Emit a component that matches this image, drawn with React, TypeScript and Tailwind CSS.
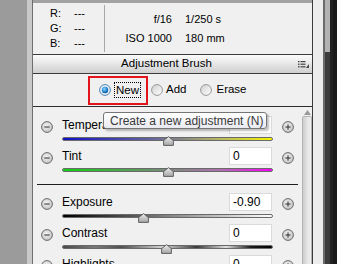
import React from 'react';

const sliders = [
  { id: 'temp', label: 'Temperature', value: '', pos: 50, track: 'bg-[linear-gradient(to_right,#1010c8,#6a6a9a_45%,#b8b860_75%,#f4f400)]' },
  { id: 'tint', label: 'Tint', value: '0', pos: 50, track: 'bg-[linear-gradient(to_right,#10d010,#709070_45%,#b070b0_75%,#f800f8)]' },
];

const tone = [
  { id: 'exposure', label: 'Exposure', value: '-0.90', pos: 38.5, track: 'bg-[linear-gradient(to_right,#000,#5a5a5a_35%,#b8b8b8_70%,#fff)]' },
  { id: 'contrast', label: 'Contrast', value: '0', pos: 49.5, track: 'bg-[linear-gradient(to_right,#4a4a4a,#7a7a7a_15%,#505050_28%,#d8d8d8_48%,#3a3a3a_64%,#e0e0e0_78%,#1a1a1a_90%,#000)]' },
  { id: 'highlights', label: 'Highlights', value: '0', pos: 50, track: 'bg-[linear-gradient(to_right,#555,#ddd)]' },
];

function RoundButton({ plus }: { plus?: boolean }) {
  return (
    <svg width="12" height="12" viewBox="0 0 12 12" className="block">
      <defs>
        <radialGradient id={plus ? 'gp' : 'gm'} cx="45%" cy="40%" r="60%">
          <stop offset="0" stopColor="#f4f4f4" />
          <stop offset="1" stopColor="#c4c4c4" />
        </radialGradient>
      </defs>
      <circle cx="6" cy="6" r="5.4" fill={`url(#${plus ? 'gp' : 'gm'})`} stroke="#5e5e5e" strokeWidth="0.9" />
      <path d="M3.4 6h5.2" stroke="#2a2a2a" strokeWidth="1" />
      {plus && <path d="M6 3.4v5.2" stroke="#2a2a2a" strokeWidth="1" />}
    </svg>
  );
}

function Thumb() {
  return (
    <svg width="11" height="10" viewBox="0 0 11 10" className="block">
      <defs>
        <linearGradient id="th" x1="0" y1="0" x2="0" y2="1">
          <stop offset="0" stopColor="#eeeeee" />
          <stop offset="1" stopColor="#a4a4a4" />
        </linearGradient>
      </defs>
      <path d="M5.5 0.6 L10.4 4.6 L10.4 9.4 L0.6 9.4 L0.6 4.6 Z" fill="url(#th)" stroke="#555" strokeWidth="0.9" />
    </svg>
  );
}

function SliderRow({ label, value, pos, track }: { label: string; value: string; pos: number; track: string }) {
  return (
    <div className="flex h-[31px] shrink-0 pl-[8px]">
      <div className="mt-[5px] w-[12px]">
        <RoundButton />
      </div>
      <div className="ml-[9px] flex w-[211px] flex-col">
        <div className="flex h-[18px] items-center justify-between">
          <span className="text-[12px] leading-none text-black">{label}</span>
          <div className="mr-[1px] flex h-[18px] w-[43px] items-center border border-[#dadada] bg-white pl-[3px] text-[12px] text-black">
            {value}
          </div>
        </div>
        <div className={`relative mt-[3px] h-[4px] rounded-full border border-[#6a6a6a] ${track}`}>
          <div className="absolute top-[-2px] -ml-[5px]" style={{ left: `${pos}%` }}>
            <Thumb />
          </div>
        </div>
      </div>
      <div className="ml-[9px] mt-[5px] w-[12px]">
        <RoundButton plus />
      </div>
    </div>
  );
}

function Radio({ checked }: { checked?: boolean }) {
  if (checked) {
    return (
      <svg width="12" height="12" viewBox="0 0 12 12" className="block shrink-0">
        <defs>
          <radialGradient id="rc" cx="40%" cy="35%" r="65%">
            <stop offset="0" stopColor="#8fd3ff" />
            <stop offset="0.6" stopColor="#2b8fd6" />
            <stop offset="1" stopColor="#0d4f8f" />
          </radialGradient>
        </defs>
        <circle cx="6" cy="6" r="5.4" fill="#e6eef6" stroke="#3d7bad" strokeWidth="0.9" />
        <circle cx="6" cy="6" r="3.2" fill="url(#rc)" />
      </svg>
    );
  }
  return (
    <svg width="12" height="12" viewBox="0 0 12 12" className="block shrink-0">
      <defs>
        <linearGradient id="ru" x1="0" y1="0" x2="1" y2="1">
          <stop offset="0" stopColor="#d0d0d0" />
          <stop offset="1" stopColor="#ffffff" />
        </linearGradient>
      </defs>
      <circle cx="6" cy="6" r="5.4" fill="url(#ru)" stroke="#8c8e90" strokeWidth="0.9" />
    </svg>
  );
}

export default function App() {
  return (
    <div className="relative flex h-[264px] w-[337px] overflow-hidden bg-[#9b9b9b] font-['Liberation_Sans',Arial,sans-serif]">
      {/* left gutter */}
      <div className="w-[27px] shrink-0 bg-[#9b9b9b]" />
      <div className="w-[5px] shrink-0 bg-[#c8c8c8]" />
      <div className="w-px shrink-0 bg-[#6e6e6e]" />

      {/* panel */}
      <div className="flex w-[280px] shrink-0 flex-col border-r border-[#3c3c3c] bg-[#f0f0f0]">
        <div className="h-[3px] shrink-0 bg-[#a2a2a2]" />

        {/* info */}
        <div className="flex h-[51px] shrink-0 text-[11px] text-black">
          <div className="w-[71px] pl-[17px] pt-[3px] leading-[15px]">
            {['R:', 'G:', 'B:'].map((c) => (
              <div key={c} className="flex">
                <span className="w-[24px]">{c}</span>
                <span>---</span>
              </div>
            ))}
          </div>
          <div className="my-[2px] w-px bg-[#a8a8a8]" />
          <div className="flex pt-[7px] leading-[19px]">
            <div className="w-[67px] text-right">
              <div>f/16</div>
              <div>ISO 1000</div>
            </div>
            <div className="ml-[13px]">
              <div>1/250 s</div>
              <div>180 mm</div>
            </div>
          </div>
        </div>

        {/* header */}
        <div className="flex h-[20px] shrink-0 items-center border-y border-[#3c3c3c] bg-[linear-gradient(#fbfbfb,#e4e4e4_55%,#cfcfcf)]">
          <span className="flex-1 pl-[2px] text-center text-[11.5px] text-black">Adjustment Brush</span>
          <svg width="11" height="7" viewBox="0 0 11 7" className="mr-[3px]">
            <rect x="0" y="0" width="1.5" height="1.2" fill="#333" />
            <rect x="0" y="2.6" width="1.5" height="1.2" fill="#333" />
            <rect x="0" y="5.2" width="1.5" height="1.2" fill="#333" />
            <rect x="2.5" y="0" width="5" height="1.2" fill="#444" />
            <rect x="2.5" y="2.6" width="5" height="1.2" fill="#444" />
            <rect x="2.5" y="5.2" width="5" height="1.2" fill="#444" />
            <path d="M11 3 L11 7 L8 7 Z" fill="#444" />
          </svg>
        </div>

        {/* mode radios */}
        <div className="flex h-[33px] shrink-0 items-center border-b border-[#2e2e2e] text-[11.5px] text-black">
          <div className="ml-[55px] flex h-[29px] w-[60px] items-center border-2 border-[#e3141c] pl-[9px]">
            <Radio checked />
            <span className="ml-[3px] border border-dotted border-black px-[1px] leading-[14px]">New</span>
          </div>
          <div className="ml-[3px]">
            <Radio />
          </div>
          <span className="ml-[3px]">Add</span>
          <div className="ml-[14px]">
            <Radio />
          </div>
          <span className="ml-[4px]">Erase</span>
        </div>

        {/* sliders */}
        <div className="flex min-h-0 flex-1">
          <div className="flex w-[269px] flex-col pt-[9px]">
            {sliders.map((s) => (
              <SliderRow key={s.id} label={s.label} value={s.value} pos={s.pos} track={s.track} />
            ))}
            <div className="mx-[4px] mt-[6px] h-px shrink-0 bg-[#1e1e1e]" />
            <div className="h-[8px] shrink-0" />
            {tone.map((s) => (
              <SliderRow key={s.id} label={s.label} value={s.value} pos={s.pos} track={s.track} />
            ))}
          </div>
          <div className="flex w-[10px] flex-col">
            <div className="flex h-[8px] items-end justify-center">
              <svg width="7" height="5" viewBox="0 0 7 5">
                <path d="M3.5 0 L7 5 L0 5 Z" fill="#9a9a9a" />
              </svg>
            </div>
            <div className="mt-[1px] flex-1 rounded-t-[2px] border border-b-0 border-[#b4b4b4] bg-[linear-gradient(to_right,#cdcdcd,#e6e6e6_60%,#efefef)]" />
          </div>
        </div>
      </div>

      {/* right edge */}
      <div className="w-[10px] shrink-0 bg-[#ececec]" />
      <div className="w-[2px] shrink-0 bg-[#6a6a6a]" />
      <div className="flex w-[5px] shrink-0 flex-col">
        <div className="h-[52px] bg-[#b2b2b2]" />
        <div className="flex-1 bg-[#3c3c3c]" />
      </div>
      <div className="w-[3px] shrink-0 bg-[#222]" />
      <div className="w-[4px] shrink-0 bg-[#1a1a1a]" />

      {/* tooltip */}
      <div className="absolute left-[103px] top-[112px] flex h-[17px] w-[164px] items-center rounded-[3px] border border-[#767676] bg-[linear-gradient(#ffffff,#e9eaf1)] pl-[6px] text-[12px] text-[#3a3a3a] shadow-[2px_2px_2px_rgba(0,0,0,0.25)]">
        Create a new adjustment (N)
      </div>
    </div>
  );
}
